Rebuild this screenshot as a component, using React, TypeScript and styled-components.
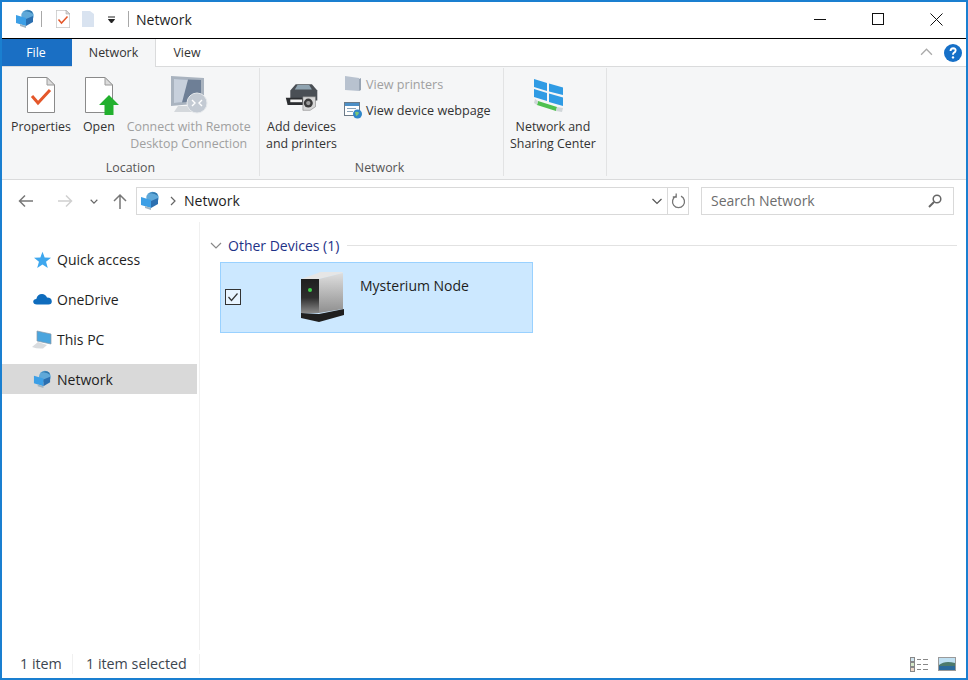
import styled, { createGlobalStyle } from "styled-components";

const GlobalStyle = createGlobalStyle`
  html, body {
    margin: 0;
    padding: 0;
    background: #ffffff;
  }
  * {
    box-sizing: border-box;
  }
`;

const Win = styled.div`
  width: 968px;
  height: 680px;
  border: 2px solid #1a7fd0;
  display: flex;
  flex-direction: column;
  font-family: "Open Sans", "Noto Sans", sans-serif;
  color: #222;
  overflow: hidden;
  background: #fff;
`;

const TitleBar = styled.div`
  height: 37px;
  flex: none;
  display: flex;
  align-items: center;
  border-bottom: 1px solid #000;
  padding: 0 0 2px 13px;
`;
const TitleSep = styled.div<{ $l?: number }>`
  width: 1px;
  height: 16px;
  background: #a8a8a8;
  margin: 0 14px 0 ${(p) => p.$l ?? 6}px;
`;
const TitleText = styled.div`
  font-size: 14px;
  color: #1e1e1e;
  flex: 1;
  margin-left: -7px;
`;
const CaptionBtns = styled.div`
  display: flex;
  align-items: center;
  padding-right: 23px;
  gap: 46px;
`;

const Tabs = styled.div`
  height: 28px;
  flex: none;
  display: flex;
  align-items: stretch;
  position: relative;
`;
const FileTab = styled.div`
  width: 70px;
  height: 27px;
  background: #1a6fc4;
  color: #fff;
  font-size: 12.4px;
  padding: 0 2px 1px 0;
  display: flex;
  align-items: center;
  justify-content: center;
`;
const Tab = styled.div<{ $active?: boolean }>`
  width: ${(p) => (p.$active ? 84 : 62)}px;
  height: ${(p) => (p.$active ? 28 : 27)}px;
  font-size: 12.4px;
  color: #333;
  padding-bottom: 1px;
  display: flex;
  align-items: center;
  justify-content: center;
  background: ${(p) => (p.$active ? "#f5f6f7" : "#fff")};
  border-right: ${(p) => (p.$active ? "1px solid #dadbdc" : "none")};
  position: relative;
  z-index: 1;
`;
const TabsRight = styled.div`
  margin-left: auto;
  display: flex;
  align-items: center;
  gap: 11px;
  padding-right: 4px;
  height: 27px;
`;

const Ribbon = styled.div`
  height: 114px;
  flex: none;
  margin-top: -1px;
  display: flex;
  background: #f5f6f7;
  border-top: 1px solid #dadbdc;
  border-bottom: 1px solid #dadbdc;
`;
const Group = styled.div<{ $w: number }>`
  width: ${(p) => p.$w}px;
  flex: none;
  border-right: 1px solid #e2e3e4;
  margin: 1px 0 3px;
  display: flex;
  flex-direction: column;
`;
const GroupBody = styled.div<{ $gap: number; $pad: number }>`
  flex: 1;
  display: flex;
  gap: ${(p) => p.$gap}px;
  padding-left: ${(p) => p.$pad}px;
  padding-top: 7px;
`;
const GroupLabel = styled.div<{ $shift?: number }>`
  height: 21px;
  padding: 4px ${(p) => p.$shift ?? 0}px 0 0;
  font-size: 12.4px;
  color: #555;
  text-align: center;
  line-height: 17px;
`;
const BigBtn = styled.div<{ $off?: boolean }>`
  display: flex;
  flex-direction: column;
  align-items: center;
  font-size: 12.4px;
  line-height: 17px;
  text-align: center;
  white-space: pre;
  color: ${(p) => (p.$off ? "#a0a0a0" : "#333")};
`;
const BigIcon = styled.div`
  height: 40px;
  margin-bottom: 3px;
  display: flex;
  align-items: center;
  justify-content: center;
`;
const OverhangIcon = styled(BigIcon)`
  margin-left: -8px;
  margin-right: -8px;
`;
const SmallCol = styled.div`
  display: flex;
  flex-direction: column;
  gap: 4px;
  margin-top: -2px;
`;
const SmallBtn = styled.div<{ $off?: boolean }>`
  display: flex;
  align-items: center;
  gap: 3px;
  height: 22px;
  font-size: 12.6px;
  color: ${(p) => (p.$off ? "#a0a0a0" : "#333")};
`;

const AddressRow = styled.div`
  height: 42px;
  flex: none;
  display: flex;
  align-items: center;
  padding: 0 0 1px 16px;
`;
const NavBtns = styled.div`
  width: 118px;
  display: flex;
  align-items: center;
  gap: 14px;
`;
const AddressBox = styled.div`
  width: 553px;
  height: 28px;
  border: 1px solid #d9d9d9;
  display: flex;
  align-items: center;
  padding-left: 3px;
  font-size: 14px;
  color: #1e1e1e;
`;
const Crumb = styled.span`
  margin-left: 7px;
  flex: 1;
`;
const AddressEnd = styled.div`
  display: flex;
  align-items: center;
  height: 100%;
  gap: 4px;
`;
const RefreshBox = styled.div`
  width: 21px;
  height: 100%;
  border-left: 1px solid #d9d9d9;
  display: flex;
  align-items: center;
  justify-content: center;
`;
const SearchBox = styled.div`
  width: 253px;
  height: 28px;
  margin-left: 12px;
  border: 1px solid #d9d9d9;
  display: flex;
  align-items: center;
  justify-content: space-between;
  padding: 0 11px 0 9px;
  font-size: 14px;
  color: #6d6d6d;
`;

const Main = styled.div`
  flex: 1;
  display: flex;
  min-height: 0;
`;
const NavPane = styled.div`
  width: 198px;
  flex: none;
  border-right: 1px solid #f0f0f0;
  padding-top: 22px;
  display: flex;
  flex-direction: column;
  gap: 10px;
`;
const NavItem = styled.div<{ $sel?: boolean }>`
  width: 195px;
  height: 30px;
  display: flex;
  align-items: center;
  padding-left: 30px;
  gap: 5px;
  font-size: 14px;
  color: #1e1e1e;
  background: ${(p) => (p.$sel ? "#d9d9d9" : "transparent")};
`;
const NavIcon = styled.div`
  width: 20px;
  display: flex;
  justify-content: center;
`;
const Content = styled.div`
  flex: 1;
  padding: 14px 9px 0 10px;
`;
const GroupHead = styled.div`
  display: flex;
  align-items: center;
  height: 18px;
  gap: 6px;
  font-size: 14px;
  line-height: 17px;
  color: #1e3287;
`;
const HeadLine = styled.div`
  flex: 1;
  height: 1px;
  background: #e2e2e2;
  margin-left: 2px;
`;
const Tile = styled.div`
  width: 313px;
  height: 71px;
  margin: 8px 0 0 10px;
  background: #cce8ff;
  border: 1px solid #99d1ff;
  display: flex;
`;
const Check = styled.div`
  width: 16px;
  height: 16px;
  margin: 26px 0 0 4px;
  border: 1px solid #333;
  background: #e8f4ff;
  display: flex;
  align-items: center;
  justify-content: center;
  flex: none;
`;
const TileIcon = styled.div`
  margin: 8px 0 0 59px;
  flex: none;
`;
const TileName = styled.div`
  margin: 13px 0 0 14px;
  font-size: 14px;
  color: #1e1e1e;
`;

const StatusBar = styled.div`
  height: 28px;
  flex: none;
  display: flex;
  align-items: center;
  font-size: 14.3px;
  color: #3c4650;
  padding: 0 10px 0 18px;
`;
const StatusCell = styled.div<{ $w: number }>`
  width: ${(p) => p.$w}px;
  margin-right: 13px;
  height: 20px;
  line-height: 20px;
  border-right: 1px solid #f0f0f0;
`;
const StatusIcons = styled.div`
  margin-left: auto;
  display: flex;
  gap: 10px;
  align-items: center;
`;

function NetworkIcon({ size = 20 }: { size?: number }) {
  return (
    <svg width={size} height={size} viewBox="0 0 20 20">
      <circle cx="12.5" cy="7" r="6.2" fill="#5fa8d8" />
      <path d="M8 3 Q13 1 18 5 L17 2.5 Q13 0 8 3Z" fill="#2f76ab" />
      <path d="M1 6 L11 9 L11 17 L1 14Z" fill="#3c9fe6" />
      <path d="M11 10 L18 7 L18 13 L11 17Z" fill="#2b6fb0" />
      <path d="M5 15 L11 17 L11 19 L5 17Z" fill="#9fb5c4" />
    </svg>
  );
}

function PropsIcon({ w = 28, h = 36 }: { w?: number; h?: number }) {
  return (
    <svg width={w} height={h} viewBox="0 0 28 36">
      <path d="M.5.5 H20 L27.5 8 V35.5 H.5Z" fill="#fff" stroke="#8a8a8a" />
      <path d="M20 .5 V8 H27.5Z" fill="#dcdcdc" stroke="#9a9a9a" />
      <path d="M5 19 L11 26 L23 13" fill="none" stroke="#e4572a" strokeWidth="3" />
    </svg>
  );
}

function OpenIcon() {
  return (
    <svg width="41" height="40" viewBox="-7 -2 41 40">
      <path d="M.5 .5 H20 L27.5 8 V35.5 H.5Z" fill="#fff" stroke="#8a8a8a" />
      <path d="M20 .5 V8 H27.5Z" fill="#dcdcdc" stroke="#9a9a9a" />
      <path d="M24 18 L34 28 H28.5 V38 H19.5 V28 H14Z" fill="#22b02e" />
    </svg>
  );
}

function RemoteIcon() {
  return (
    <svg width="42" height="40" viewBox="0 0 42 40">
      <path d="M3 1 L36 3 L36 28 L3 31Z" fill="#a9b3bf" />
      <path d="M6 4 L33 5 L33 26 L6 28Z" fill="#6e7f96" />
      <path d="M6 4 L20 4.5 L14 27.5 L6 28Z" fill="#c7d0dc" />
      <path d="M10 31 H26 L30 37 H6Z" fill="#d4d8dc" />
      <circle cx="29" cy="28" r="10" fill="#c3cad3" stroke="#e6e9ec" />
      <path d="M24 25 L27 28 L24 31 M34 25 L31 28 L34 31" fill="none" stroke="#fff" strokeWidth="1.4" />
    </svg>
  );
}

function PrinterIcon() {
  return (
    <svg width="36" height="36" viewBox="0 -6 38 40">
      <path d="M6 9 L12 2 H30 L36 9 V20 H6Z" fill="#4a4f55" />
      <path d="M14 3 H27 L30 8 H11Z" fill="#8fa3b0" />
      <path d="M1 17 H20 V25 H3Z" fill="#2c2e31" />
      <path d="M6 19 H19 V22 H6Z" fill="#f2f2f2" />
      <path d="M20 16 H34 V27 L28 31 H20Z" fill="#d6d6d6" stroke="#777" strokeWidth=".6" />
      <circle cx="26" cy="23" r="5" fill="#3b3b3b" />
      <circle cx="26" cy="23" r="2.4" fill="#9b9b9b" />
    </svg>
  );
}

function PrintersSmall() {
  return (
    <svg width="19" height="18" viewBox="0 0 19 18">
      <path d="M1 1 L15 3 V16 L1 15Z" fill="#b8c2cf" />
      <path d="M15 4 L17 3 V15 L15 16Z" fill="#98a4b3" />
    </svg>
  );
}

function WebpageIcon() {
  return (
    <svg width="19" height="18" viewBox="0 0 19 18">
      <rect x=".5" y="1.5" width="15" height="13" fill="#fff" stroke="#6b7a88" />
      <rect x="1" y="2" width="14" height="3" fill="#4c8fc6" />
      <rect x="3" y="7" width="9" height="1" fill="#8aa3b8" />
      <rect x="3" y="10" width="6" height="1" fill="#8aa3b8" />
      <circle cx="13.5" cy="13" r="4.5" fill="#2f86c9" />
      <path d="M11 11 Q14 10 15 12 Q14 15 12 15Z" fill="#7cc576" />
    </svg>
  );
}

function SharingIcon() {
  return (
    <svg width="40" height="34" viewBox="0 0 40 34">
      <path d="M1 1 L14 5 V13 L1 9Z" fill="#2f9be4" />
      <path d="M16 5.5 L30 9.5 V17 L16 13.5Z" fill="#2f9be4" />
      <path d="M1 11 L14 15 V23 L1 19Z" fill="#2f9be4" />
      <path d="M16 15.5 L30 19.5 V28 L16 24Z" fill="#2f9be4" />
      <path d="M5 23 L24 29 L23 33 L4 27Z" fill="#4fc14f" />
      <path d="M24 29 L30 30 L29 34 L23 33Z" fill="#d0d6d9" />
      <path d="M2 21 L5 23 L4 27 L1 25Z" fill="#d0d6d9" />
    </svg>
  );
}

function Star() {
  return (
    <svg width="17" height="17" viewBox="0 0 24 24">
      <path d="M12 1 L15 9 L24 9.5 L17 15 L19.5 24 L12 19 L4.5 24 L7 15 L0 9.5 L9 9Z" fill="#3ea7ee" />
    </svg>
  );
}

function Cloud() {
  return (
    <svg width="19" height="12" viewBox="0 0 19 12">
      <path d="M4 11.5 Q.2 11.5 .2 8.5 Q.5 6 3.3 6 Q4.5 1 9 1 Q12.5 1 14 4.5 Q18.8 4.5 18.8 8.5 Q18.8 11.5 15.5 11.5Z" fill="#0f6cbd" />
    </svg>
  );
}

function Pc() {
  return (
    <svg width="20" height="19" viewBox="0 0 20 19">
      <path d="M5 1 L19 4 V14 L5 11Z" fill="#4aa5de" stroke="#8a9aa8" strokeWidth=".7" />
      <path d="M0 17 L6 12 L15 15 L11 18.5 Q5 19 0 17Z" fill="#d9dcdf" />
    </svg>
  );
}

function ServerIcon() {
  return (
    <svg width="46" height="52" viewBox="0 0 46 52">
      <defs>
        <linearGradient id="srvFront" x1="0" y1="0" x2="0" y2="1">
          <stop offset="0" stopColor="#1f1f1f" />
          <stop offset="0.55" stopColor="#2e2e2e" />
          <stop offset="1" stopColor="#8a8a8a" />
        </linearGradient>
        <linearGradient id="srvSide" x1="0" y1="0" x2="0" y2="1">
          <stop offset="0" stopColor="#dedede" />
          <stop offset="1" stopColor="#8f8f8f" />
        </linearGradient>
      </defs>
      <path d="M1 8 L18 2 Q19 1 21 1 H42 L43 2 L19 8Z" fill="#e6e6e6" />
      <path d="M19 8 L43 2 V38 L19 42Z" fill="url(#srvSide)" />
      <path d="M1 8 H19 V42 H1Z" fill="url(#srvFront)" />
      <circle cx="10" cy="19" r="2" fill="#3fd14a" />
      <path d="M1 42 L19 43 L44 38 V44 L19 51 L1 47Z" fill="#1f1f1f" />
    </svg>
  );
}

function Chev({ d, w = 12, h = 12, color = "#666" }: { d: string; w?: number; h?: number; color?: string }) {
  return (
    <svg width={w} height={h} viewBox="0 0 12 12">
      <path d={d} fill="none" stroke={color} strokeWidth="1.2" />
    </svg>
  );
}

export default function App() {
  return (
    <Win>
      <GlobalStyle />
      <TitleBar>
        <NetworkIcon />
        <TitleSep />
        <PropsIcon w={14} h={18} />
        <svg width="14" height="18" viewBox="0 0 14 18" style={{ marginLeft: 11 }}>
          <path d="M1 1 H9 L13 4 V17 H1Z" fill="#d9e3f0" />
        </svg>
        <svg width="10" height="8" viewBox="0 0 10 8" style={{ marginLeft: 12, marginTop: 2 }}>
          <path d="M1 1 H8 M1.5 3.5 H7.5 L4.5 7Z" stroke="#222" fill="#222" />
        </svg>
        <TitleSep $l={11} />
        <TitleText>Network</TitleText>
        <CaptionBtns>
          <svg width="12" height="12" viewBox="0 0 12 12">
            <path d="M0 6.5 H12" stroke="#111" />
          </svg>
          <svg width="12" height="12" viewBox="0 0 12 12">
            <rect x=".5" y=".5" width="11" height="11" fill="none" stroke="#111" />
          </svg>
          <svg width="13" height="13" viewBox="0 0 13 13">
            <path d="M.5 .5 L12.5 12.5 M12.5 .5 L.5 12.5" stroke="#111" />
          </svg>
        </CaptionBtns>
      </TitleBar>

      <Tabs>
        <FileTab>File</FileTab>
        <Tab $active>Network</Tab>
        <Tab>View</Tab>
        <TabsRight>
          <Chev d="M1 8 L6 3 L11 8" color="#aaa" w={13} h={13} />
          <svg width="18" height="18" viewBox="0 0 18 18">
            <circle cx="9" cy="9" r="9" fill="#1670c8" />
            <path d="M6.5 7 Q6.7 4.2 9.2 4.2 Q11.8 4.3 11.6 6.6 Q11.4 8 9.8 8.8 Q9 9.4 9 10.8" fill="none" stroke="#fff" strokeWidth="1.9" />
            <circle cx="9" cy="13.4" r="1.2" fill="#fff" />
          </svg>
        </TabsRight>
      </Tabs>

      <Ribbon>
        <Group $w={258}>
          <GroupBody $gap={12} $pad={9}>
            <BigBtn>
              <BigIcon><PropsIcon /></BigIcon>
              Properties
            </BigBtn>
            <BigBtn>
              <OverhangIcon><OpenIcon /></OverhangIcon>
              Open
            </BigBtn>
            <BigBtn $off>
              <BigIcon><RemoteIcon /></BigIcon>
              {"Connect with Remote\nDesktop Connection"}
            </BigBtn>
          </GroupBody>
          <GroupLabel>Location</GroupLabel>
        </Group>
        <Group $w={244}>
          <GroupBody $gap={7} $pad={6}>
            <BigBtn>
              <BigIcon><PrinterIcon /></BigIcon>
              {"Add devices\nand printers"}
            </BigBtn>
            <SmallCol>
              <SmallBtn $off><PrintersSmall />View printers</SmallBtn>
              <SmallBtn><WebpageIcon />View device webpage</SmallBtn>
            </SmallCol>
          </GroupBody>
          <GroupLabel $shift={4}>Network</GroupLabel>
        </Group>
        <Group $w={103}>
          <GroupBody $gap={0} $pad={6}>
            <BigBtn>
              <BigIcon><SharingIcon /></BigIcon>
              {"Network and\nSharing Center"}
            </BigBtn>
          </GroupBody>
        </Group>
      </Ribbon>

      <AddressRow>
        <NavBtns>
          <svg width="16" height="14" viewBox="0 0 16 14">
            <path d="M15 7 H1.5 M7 1.5 L1.5 7 L7 12.5" fill="none" stroke="#777" strokeWidth="1.5" />
          </svg>
          <svg width="16" height="14" viewBox="0 0 16 14" style={{ marginLeft: 9 }}>
            <path d="M1 7 H14.5 M9 1.5 L14.5 7 L9 12.5" fill="none" stroke="#d0d0d0" strokeWidth="1.5" />
          </svg>
          <svg width="10" height="10" viewBox="0 0 12 12" style={{ marginLeft: 2 }}>
            <path d="M2 4.5 L6 8.5 L10 4.5" fill="none" stroke="#666" strokeWidth="1.4" />
          </svg>
          <svg width="14" height="16" viewBox="0 0 14 16">
            <path d="M7 16 V2 M1 8 L7 2 L13 8" fill="none" stroke="#777" strokeWidth="1.5" />
          </svg>
        </NavBtns>
        <AddressBox>
          <NetworkIcon />
          <svg width="8" height="10" viewBox="0 0 8 10" style={{ marginLeft: 9 }}>
            <path d="M2 1 L6 5 L2 9" fill="none" stroke="#666" strokeWidth="1.2" />
          </svg>
          <Crumb>Network</Crumb>
          <AddressEnd>
            <Chev d="M1.5 4 L6 8.5 L10.5 4" color="#555" />
            <RefreshBox>
              <svg width="15" height="16" viewBox="0 0 15 16">
                <path d="M5 3.2 A6 6 0 1 0 10 3.2 M5.2 .5 L5.2 4 L1.8 4" fill="none" stroke="#777" strokeWidth="1.3" />
              </svg>
            </RefreshBox>
          </AddressEnd>
        </AddressBox>
        <SearchBox>
          Search Network
          <svg width="14" height="14" viewBox="0 0 14 14">
            <circle cx="9" cy="5" r="3.8" fill="none" stroke="#666" strokeWidth="1.5" />
            <path d="M6 8 L1 13" stroke="#666" strokeWidth="2" />
          </svg>
        </SearchBox>
      </AddressRow>

      <Main>
        <NavPane>
          <NavItem><NavIcon><Star /></NavIcon>Quick access</NavItem>
          <NavItem><NavIcon><Cloud /></NavIcon>OneDrive</NavItem>
          <NavItem><NavIcon><Pc /></NavIcon>This PC</NavItem>
          <NavItem $sel><NavIcon><NetworkIcon size={19} /></NavIcon>Network</NavItem>
        </NavPane>
        <Content>
          <GroupHead>
            <Chev d="M1 4 L6 9 L11 4" color="#888" />
            Other Devices (1)
            <HeadLine />
          </GroupHead>
          <Tile>
            <Check>
              <svg width="12" height="12" viewBox="0 0 12 12">
                <path d="M1.5 6 L4.5 9.5 L10.5 2.5" fill="none" stroke="#333" strokeWidth="1.2" />
              </svg>
            </Check>
            <TileIcon><ServerIcon /></TileIcon>
            <TileName>Mysterium Node</TileName>
          </Tile>
        </Content>
      </Main>

      <StatusBar>
        <StatusCell $w={53}>1 item</StatusCell>
        <StatusCell $w={114}>1 item selected</StatusCell>
        <StatusIcons>
          <svg width="18" height="15" viewBox="0 0 18 15">
            <rect x=".5" y=".5" width="4" height="4" fill="#cfe3ee" stroke="#888" />
            <rect x=".5" y="5.5" width="4" height="4" fill="#d6e8c8" stroke="#888" />
            <rect x=".5" y="10.5" width="4" height="4" fill="#eed7c8" stroke="#888" />
            <path d="M7 2.5 H11 M13 2.5 H18 M7 7.5 H11 M13 7.5 H18 M7 12.5 H11 M13 12.5 H18" stroke="#888" />
          </svg>
          <svg width="18" height="14" viewBox="0 0 18 14">
            <rect x=".5" y=".5" width="17" height="13" fill="#bfe0f2" stroke="#9a9a9a" />
            <path d="M1 8 Q7 3 17 6 V9 L1 10Z" fill="#4d7a6c" />
            <rect x="1" y="9" width="16" height="4" fill="#2c6a9c" />
          </svg>
        </StatusIcons>
      </StatusBar>
    </Win>
  );
}
